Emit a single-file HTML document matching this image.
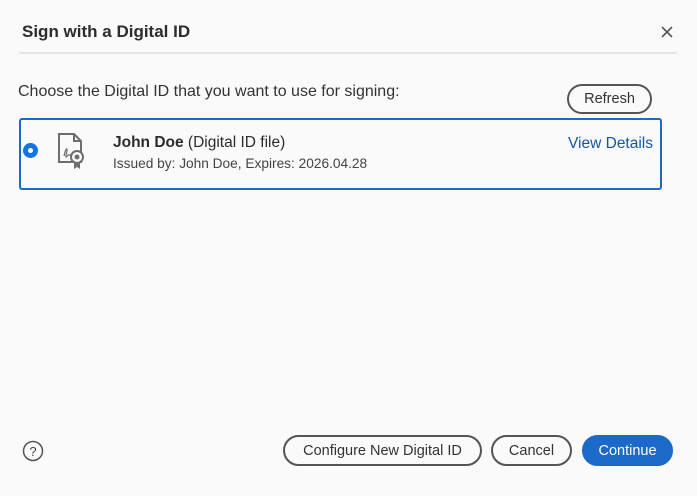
<!DOCTYPE html>
<html><head><meta charset="utf-8"><style>
*{margin:0;padding:0;box-sizing:border-box}
body{width:697px;height:496px;background:#fafafa;font-family:"Liberation Sans",Arial,sans-serif;color:#2c2c2c;position:relative;overflow:hidden}
.a{position:absolute;white-space:nowrap}
.btn{position:absolute;border:2px solid #555;border-radius:16px;font-size:14.5px;display:flex;align-items:center;justify-content:center;color:#333;background:#fafafa}
</style></head><body>
<div class="a" style="left:22px;top:22px;font-size:17px;font-weight:bold;color:#2c2c2c">Sign with a Digital ID</div>
<svg class="a" style="left:660px;top:25px" width="14" height="14" viewBox="0 0 14 14"><path d="M2 2L12 12M12 2L2 12" stroke="#555" stroke-width="1.6"/></svg>
<div class="a" style="left:19px;top:52px;width:658px;height:2px;background:#e6e6e6"></div>
<div class="a" style="left:18px;top:83px;font-size:16px;color:#333">Choose the Digital ID that you want to use for signing:</div>
<div class="btn" style="left:567px;top:84px;width:85px;height:30px">Refresh</div>
<div class="a" style="left:19px;top:118px;width:643px;height:72px;border:2px solid #1b6ac9;border-radius:3px"></div>
<div class="a" style="left:23px;top:143px;width:15px;height:15px;border-radius:50%;background:#1473e6"><div style="position:absolute;left:5px;top:5px;width:5px;height:5px;border-radius:50%;background:#fff"></div></div>
<svg class="a" style="left:56px;top:132px" width="34" height="38" viewBox="0 0 34 38">
<path d="M3 2H18L25 9V30H3Z" fill="none" stroke="#6e6e6e" stroke-width="2"/>
<path d="M18 2V9H25" fill="none" stroke="#6e6e6e" stroke-width="2"/>
<path d="M8 24C9 20 10 16 11 17C12 18 9 24 10 25C11 25 12 22 13 23C14 24 15 22 16 23" fill="none" stroke="#6e6e6e" stroke-width="1.2"/>
<path d="M18 30V37L21 35L24 37V30" fill="#6e6e6e"/>
<circle cx="21" cy="25" r="6" fill="#fafafa" stroke="#6e6e6e" stroke-width="2"/>
<circle cx="21" cy="25" r="2.5" fill="#6e6e6e"/>
</svg>
<div class="a" style="left:113px;top:134px;font-size:15.5px"><b>John Doe</b> (Digital ID file)</div>
<div class="a" style="left:113px;top:156px;font-size:13.7px;color:#444">Issued by: John Doe, Expires: 2026.04.28</div>
<div class="a" style="left:568px;top:135px;font-size:15.5px;color:#1256a6">View Details</div>
<svg class="a" style="left:22px;top:440px" width="22" height="22" viewBox="0 0 22 22"><circle cx="11" cy="11" r="9.5" fill="none" stroke="#555" stroke-width="1.5"/><text x="11" y="16" text-anchor="middle" font-family="Liberation Sans" font-size="13" fill="#444">?</text></svg>
<div class="btn" style="left:283px;top:435px;width:199px;height:31px">Configure New Digital ID</div>
<div class="btn" style="left:491px;top:435px;width:81px;height:31px">Cancel</div>
<div class="btn" style="left:582px;top:435px;width:91px;height:31px;background:#1b6ac9;border-color:#1b6ac9;color:#fff">Continue</div>
</body></html>
